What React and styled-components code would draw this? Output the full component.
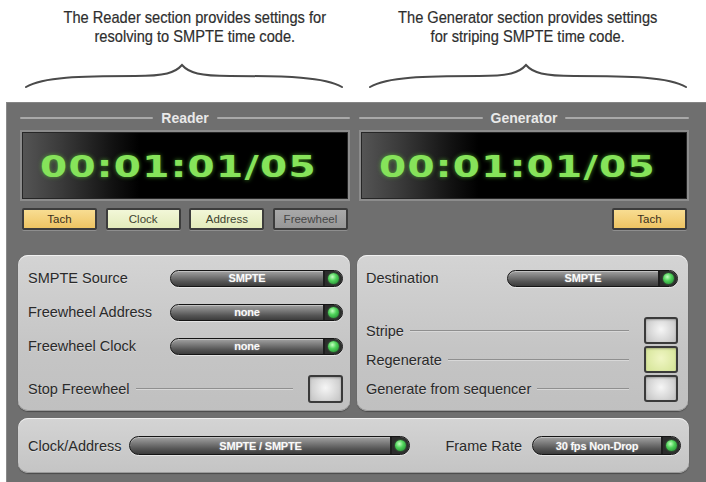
import React from "react";
import styled, { createGlobalStyle, css } from "styled-components";

const GlobalStyle = createGlobalStyle`
  html, body {
    margin: 0;
    padding: 0;
    background: #fff;
  }
  body {
    font-family: "Liberation Sans", Arial, sans-serif;
  }
`;

const Page = styled.div`
  width: 706px;
  height: 482px;
  display: flex;
  flex-direction: column;
  overflow: hidden;
`;

const Header = styled.div`
  height: 102px;
  display: grid;
  grid-template-columns: 317px 318px;
  column-gap: 27px;
  padding-left: 25px;
  box-sizing: border-box;
`;

const Note = styled.div`
  display: flex;
  flex-direction: column;
  align-items: center;
`;

const Caption = styled.p`
  margin: 8px 0 0;
  padding-left: ${(p) => p.$shift || 0}px;
  height: 55px;
  font-family: "Liberation Sans", sans-serif;
  font-size: 17px;
  line-height: 19px;
  color: #2e2e2e;
  text-align: center;
  white-space: nowrap;
  transform: scaleX(0.86);
  transform-origin: center top;
  -webkit-text-stroke: 0.2px #2e2e2e;
`;

const Brace = () => (
  <svg width="318" height="28" viewBox="0 0 318 28">
    <path
      d="M1,24 C18,14 55,13 110,13 C140,13 150,10 157,2 C164,10 175,13 205,13 C262,13 300,14 317,24"
      fill="none"
      stroke="#4a4a4a"
      strokeWidth="2"
      strokeLinecap="round"
    />
  </svg>
);

const Console = styled.div`
  flex: 1;
  margin-left: 6px;
  background: #6f6f6f;
  border-left: 1px solid #8a8a8a;
  border-top: 1px solid #858585;
  padding: 7px 15px 9px 11px;
  display: flex;
  flex-direction: column;
  gap: 7px;
`;

const Sections = styled.div`
  display: grid;
  grid-template-columns: 333px 333px;
  column-gap: 6px;
`;

const Section = styled.div`
  display: flex;
  flex-direction: column;
`;

const Head = styled.div`
  padding: 0 1px 0 2px;
  display: flex;
  flex-direction: column;
`;

const Title = styled.div`
  height: 16px;
  display: flex;
  align-items: center;
  gap: 8px;
  font-size: 14px;
  font-weight: bold;
  color: #e9e9e9;
  margin-bottom: 4px;

  &::before,
  &::after {
    content: "";
    flex: 1;
    height: 2px;
    background: #a9a9a9;
    border-radius: 1px;
  }
`;

const Display = styled.div`
  height: 71px;
  box-sizing: border-box;
  border: 2px solid #8c8c8c;
  box-shadow: inset 0 0 0 1px #262626;
  background: linear-gradient(90deg, #555 0%, #3a3a3a 12%, #111 28%, #000 36%, #000 100%);
  display: flex;
  align-items: center;
  padding-left: 18px;
  overflow: hidden;
`;

const Timecode = styled.span`
  display: inline-block;
  font-family: "DejaVu Sans", sans-serif;
  font-weight: bold;
  font-size: 30px;
  letter-spacing: 1px;
  color: #86e35a;
  text-shadow: 0 0 4px rgba(90, 200, 50, 0.7);
  transform: scaleX(1.3);
  transform-origin: left center;
  margin-top: 2px;
`;

const ButtonRow = styled.div`
  height: 22px;
  margin-top: 7px;
  display: flex;
  justify-content: ${(p) => (p.$end ? "flex-end" : "space-between")};
  padding: 0 2px;
`;

const toneStyles = {
  tach: css`
    background: linear-gradient(#f8dd92, #eec463);
    color: #3a3020;
  `,
  lit: css`
    background: linear-gradient(#f2f7d8, #e3ebbb);
    color: #3e4430;
  `,
  off: css`
    background: linear-gradient(#a9a9a9, #979797);
    color: #474747;
  `,
};

const Mode = styled.div`
  width: 75px;
  height: 22px;
  box-sizing: border-box;
  border: 2px solid #3c3c3c;
  border-radius: 2px;
  display: flex;
  align-items: center;
  justify-content: center;
  font-size: 11.5px;
  box-shadow: 0 1px 0 #8e8e8e;
  ${(p) => toneStyles[p.$tone]}
`;

const Panel = styled.div`
  margin-top: 25px;
  height: 156px;
  box-sizing: border-box;
  border-radius: 10px;
  background: linear-gradient(#d4d4d4, #c5c5c5 60%, #c0c0c0);
  box-shadow: inset 0 1px 0 #f0f0f0, inset 0 -1px 0 #9a9a9a, 0 1px 1px #4a4a4a;
  padding: ${(p) => p.$pad};
  display: flex;
  flex-direction: column;
  margin-right: ${(p) => p.$mr || 0}px;
`;

const Row = styled.div`
  height: ${(p) => p.$h || 34}px;
  margin-top: ${(p) => p.$mt || 0}px;
  display: flex;
  align-items: center;
  justify-content: space-between;
`;

const Label = styled.span`
  font-size: 14.5px;
  color: #2a2a2a;
  white-space: nowrap;
  text-shadow: 0 1px 0 rgba(255, 255, 255, 0.35);
`;

const Leader = styled.span`
  flex: 1;
  height: 1px;
  background: #8f8f8f;
  border-bottom: 1px solid #d8d8d8;
  margin: 0 15px 0 6px;
`;

const Select = styled.div`
  width: ${(p) => p.$w}px;
  height: ${(p) => p.$h || 17}px;
  box-sizing: border-box;
  border: 1px solid #151515;
  border-radius: 10px;
  background: linear-gradient(#a3a3a3, #7c7c7c 35%, #555 70%, #3c3c3c);
  box-shadow: inset 0 1px 0 rgba(255, 255, 255, 0.35), 0 1px 0 rgba(255, 255, 255, 0.5);
  display: flex;
  align-items: stretch;
  overflow: hidden;
`;

const SelectText = styled.span`
  flex: 1;
  display: flex;
  align-items: center;
  justify-content: center;
  font-size: 11px;
  font-weight: bold;
  color: #fafafa;
  text-shadow: 0 0 2px rgba(255, 255, 255, 0.4);
  letter-spacing: -0.2px;
`;

const LedBox = styled.span`
  width: 17px;
  border-left: 2px solid #1d1d1d;
  background: #2c2c2c;
  display: flex;
  align-items: center;
  justify-content: center;
`;

const Led = styled.span`
  width: 11px;
  height: 11px;
  border-radius: 50%;
  background: radial-gradient(circle at 40% 35%, #c4ffc0 0%, #4fd35a 40%, #1b7a2a 100%);
  box-shadow: 0 0 2px rgba(80, 220, 90, 0.6);
`;

const Check = styled.div`
  width: ${(p) => p.$w || 34}px;
  height: ${(p) => p.$h || 27}px;
  box-sizing: border-box;
  border: 2px solid #3a3a3a;
  border-radius: 3px;
  background: ${(p) =>
    p.$on
      ? "radial-gradient(circle at 50% 45%, #f0f6c4, #d9e79e 80%)"
      : "radial-gradient(circle at 50% 45%, #f6f6f6, #c9c9c9 85%)"};
  box-shadow: inset 0 1px 2px rgba(0, 0, 0, 0.25);
`;

const Checks = styled.div`
  margin-top: 22px;
  display: flex;
  flex-direction: column;
  gap: 2px;
`;

const BottomPanel = styled.div`
  height: 55px;
  box-sizing: border-box;
  margin-right: 2px;
  border-radius: 10px;
  background: linear-gradient(#d4d4d4, #c4c4c4);
  box-shadow: inset 0 1px 0 #f0f0f0, inset 0 -1px 0 #9a9a9a, 0 1px 1px #4a4a4a;
  display: flex;
  align-items: center;
  padding: 0 8px 0 10px;
`;

const Pair = styled.div`
  display: flex;
  align-items: center;
  gap: ${(p) => p.$gap}px;
  margin-left: ${(p) => (p.$push ? "auto" : "0")};
`;

function Dropdown({ value, w, h }) {
  return (
    <Select $w={w} $h={h}>
      <SelectText>{value}</SelectText>
      <LedBox>
        <Led />
      </LedBox>
    </Select>
  );
}

export default function App() {
  return (
    <Page>
      <GlobalStyle />
      <Header>
        <Note>
          <Caption $shift={26}>
            The Reader section provides settings for
            <br />
            resolving to SMPTE time code.
          </Caption>
          <Brace />
        </Note>
        <Note>
          <Caption>
            The Generator section provides settings
            <br />
            for striping SMPTE time code.
          </Caption>
          <Brace />
        </Note>
      </Header>

      <Console>
        <Sections>
          <Section>
            <Head>
              <Title>Reader</Title>
              <Display>
                <Timecode>00:01:01/05</Timecode>
              </Display>
              <ButtonRow>
                <Mode $tone="tach">Tach</Mode>
                <Mode $tone="lit">Clock</Mode>
                <Mode $tone="lit">Address</Mode>
                <Mode $tone="off">Freewheel</Mode>
              </ButtonRow>
            </Head>
            <Panel $pad="6px 7px 0 10px" $mr={1}>
              <Row>
                <Label>SMPTE Source</Label>
                <Dropdown value="SMPTE" w={173} />
              </Row>
              <Row>
                <Label>Freewheel Address</Label>
                <Dropdown value="none" w={173} />
              </Row>
              <Row>
                <Label>Freewheel Clock</Label>
                <Dropdown value="none" w={173} />
              </Row>
              <Row $h={28} $mt={12}>
                <Label>Stop Freewheel</Label>
                <Leader />
                <Check $w={35} $h={28} />
              </Row>
            </Panel>
          </Section>

          <Section>
            <Head>
              <Title>Generator</Title>
              <Display>
                <Timecode>00:01:01/05</Timecode>
              </Display>
              <ButtonRow $end>
                <Mode $tone="tach">Tach</Mode>
              </ButtonRow>
            </Head>
            <Panel $pad="6px 10px 0 9px" $mr={2}>
              <Row>
                <Label>Destination</Label>
                <Dropdown value="SMPTE" w={171} />
              </Row>
              <Checks>
                <Row $h={27}>
                  <Label>Stripe</Label>
                  <Leader />
                  <Check />
                </Row>
                <Row $h={27}>
                  <Label>Regenerate</Label>
                  <Leader />
                  <Check $on />
                </Row>
                <Row $h={27}>
                  <Label>Generate from sequencer</Label>
                  <Leader />
                  <Check />
                </Row>
              </Checks>
            </Panel>
          </Section>
        </Sections>

        <BottomPanel>
          <Pair $gap={8}>
            <Label>Clock/Address</Label>
            <Dropdown value="SMPTE / SMPTE" w={281} h={19} />
          </Pair>
          <Pair $gap={10} $push>
            <Label>Frame Rate</Label>
            <Dropdown value="30 fps Non-Drop" w={149} h={19} />
          </Pair>
        </BottomPanel>
      </Console>
    </Page>
  );
}
